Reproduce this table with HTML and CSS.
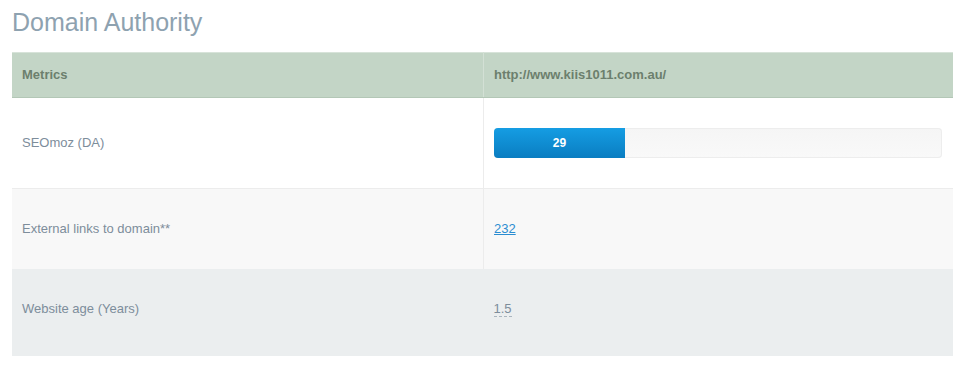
FILE: index.html
```html
<!DOCTYPE html>
<html>
<head>
<meta charset="utf-8">
<link rel="stylesheet" href="styles.css">
</head>
<body>
<h2 class="title">Domain Authority</h2>
<table class="metrics">
  <thead>
    <tr>
      <th class="col-name">Metrics</th>
      <th>http://www.kiis1011.com.au/</th>
    </tr>
  </thead>
  <tbody>
    <tr class="row-da">
      <td class="col-name">SEOmoz (DA)</td>
      <td>
        <div class="bar"><div class="fill" style="width:29.2%">29</div></div>
      </td>
    </tr>
    <tr class="row-links">
      <td class="col-name">External links to domain**</td>
      <td><a href="#" class="link">232</a></td>
    </tr>
    <tr class="row-age">
      <td class="col-name">Website age (Years)</td>
      <td><abbr class="age" title="Years">1.5</abbr></td>
    </tr>
  </tbody>
</table>
</body>
</html>
```
FILE: styles.css
```css
body {
  margin: 0;
  padding: 0 13px 0 12px;
  font-family: "Liberation Sans", Arial, sans-serif;
  font-size: 13px;
  color: #7d8d9b;
  background: #fff;
}
.title {
  margin: 0;
  padding-top: 8px;
  height: 52px;
  box-sizing: border-box;
  font-size: 25px;
  font-weight: normal;
  line-height: 29px;
  color: #8ea2b0;
}
.metrics {
  width: 941px;
  border-collapse: collapse;
  table-layout: fixed;
}
.metrics th,
.metrics td {
  text-align: left;
  padding: 0 10px;
  line-height: 16px;
}
.col-name {
  width: 451px;
}
.metrics th {
  background: #c3d5c6;
  color: #6c7f6d;
  font-weight: bold;
  height: 44px;
  border-top: 1px solid #d7e3d9;
  border-bottom: 1px solid #b3c7b6;
}
.metrics th.col-name {
  border-right: 1px solid #d3e0d5;
}
.row-da td {
  height: 90px;
  background: #fff;
}
.row-da td.col-name,
.row-links td.col-name {
  border-right: 1px solid #ececec;
}
.row-links td {
  height: 80px;
  background: #f8f8f8;
  border-top: 1px solid #ececec;
}
.row-age td {
  height: 87px;
  background: #ebeeef;
  padding-bottom: 7px;
  box-sizing: border-box;
}
.bar {
  height: 30px;
  border-radius: 4px;
  background: linear-gradient(#f5f5f5, #f9f9f9);
  box-shadow: inset 0 0 0 1px #ededed;
  overflow: hidden;
  margin-right: 1px;
}
.fill {
  height: 30px;
  background: linear-gradient(#159de3, #0a7dc1);
  color: #fff;
  font-weight: bold;
  font-size: 12px;
  text-align: center;
  line-height: 30px;
}
.link {
  color: #2b8dd1;
  text-decoration: underline;
}
.age {
  text-decoration: none;
  border-bottom: 1px dashed #aab5be;
  color: #7d8d9b;
}
```
